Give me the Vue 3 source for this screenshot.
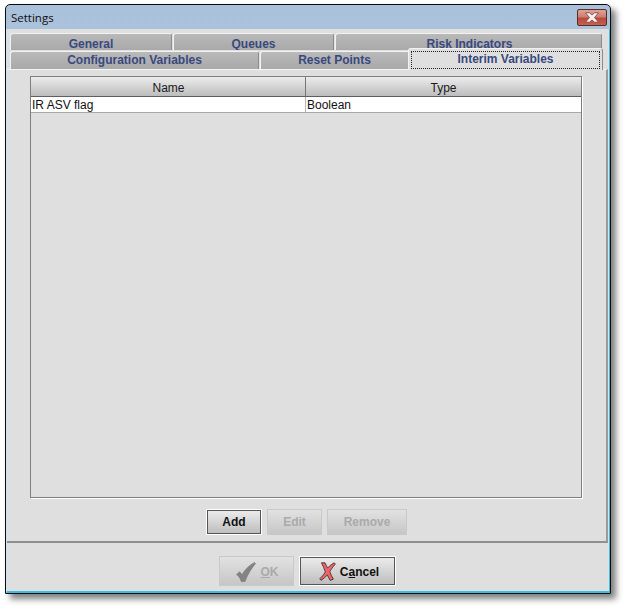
<script setup>
const rowOne = [
  { label: 'General', width: 162 },
  { label: 'Queues', width: 161 },
  { label: 'Risk Indicators', width: 267 }
]
const rowTwo = [
  { label: 'Configuration Variables', width: 249 },
  { label: 'Reset Points', width: 149 }
]
</script>

<template>
  <div class="page">
    <div class="window">
      <header class="titlebar">
        <span class="title">Settings</span>
        <button class="close" aria-label="Close">
          <svg width="16" height="11" viewBox="0 0 16 11">
            <path d="M1.5 0.8 L5.5 0.8 L8 3 L10.5 0.8 L14.5 0.8 L10.5 5.5 L14.5 10.2 L10.5 10.2 L8 8 L5.5 10.2 L1.5 10.2 L5.5 5.5 Z" fill="#f5f1f0" stroke="#7a4038" stroke-width="0.8" />
          </svg>
        </button>
      </header>
      <div class="body">
        <div class="tabs">
          <div class="tab-row first">
            <div v-for="t in rowOne" :key="t.label" class="tab" :style="{ width: t.width + 'px' }">{{ t.label }}</div>
          </div>
          <div class="tab-row second">
            <div v-for="t in rowTwo" :key="t.label" class="tab" :style="{ width: t.width + 'px' }">{{ t.label }}</div>
            <div class="tab active"><span class="focus">Interim Variables</span></div>
          </div>
        </div>
        <section class="panel">
          <div class="table">
            <div class="thead">
              <div class="th name">Name</div>
              <div class="th type">Type</div>
            </div>
            <div class="tr">
              <div class="td name">IR ASV flag</div>
              <div class="td type">Boolean</div>
            </div>
          </div>
          <div class="panel-actions">
            <button class="btn add">Add</button>
            <button class="btn edit" disabled>Edit</button>
            <button class="btn remove" disabled>Remove</button>
          </div>
        </section>
        <footer class="footer">
          <button class="btn ok" disabled>
            <svg width="20" height="20" viewBox="0 0 20 20">
              <path d="M0.5 12.5 L3.5 9.8 L6.2 12.5 C9 7.5 13.5 3 18.5 0.5 L19.5 1.5 C15.5 6.5 11.5 12.5 9 19.5 L5.2 19.5 C4.6 16.8 3 14.4 0.5 12.5 Z" fill="#848484" stroke="#767676" stroke-width="0.6" />
            </svg>
            <span><u>O</u>K</span>
          </button>
          <button class="btn cancel">
            <svg width="17" height="19" viewBox="0 0 17 19">
              <path d="M2.5 0.8 L6 0.8 C6.8 2.6 7.6 4.2 8.6 6 C10.5 4 12.6 2.2 15.2 0.8 L16.4 2 C14 4.6 12.2 7.2 10.8 9.6 C11.8 12.4 13 15 14.4 17.2 L11.2 18.4 C10 16.6 9.2 14.8 8.4 13 C6.4 15 4.4 16.8 2 18.4 L0.8 16.8 C3 14.8 4.8 12.6 6.4 10 C5.4 7 4 4 2.5 0.8 Z" fill="#f4616b" stroke="#2e2a2a" stroke-width="0.8" />
            </svg>
            <span>C<u>a</u>ncel</span>
          </button>
        </footer>
      </div>
    </div>
  </div>
</template>

<style>
html, body { margin: 0; background: #ffffff; }
</style>

<style scoped>
.page {
  width: 623px;
  height: 606px;
  padding: 4px 0 0 5px;
  box-sizing: border-box;
  font-family: "Liberation Sans", Arial, sans-serif;
}
.window {
  width: 606px;
  height: 590px;
  box-sizing: border-box;
  border: 1px solid #0c0c0c;
  border-radius: 5px 5px 0 0;
  background: linear-gradient(#a9c1da, #bccfe2);
  box-shadow: 5px 5px 6px rgba(60, 60, 60, 0.65);
  display: flex;
  flex-direction: column;
  overflow: hidden;
}
.titlebar {
  height: 24px;
  flex: none;
  display: flex;
  align-items: center;
  justify-content: space-between;
  padding: 0 3px 0 5px;
}
.title {
  font-family: "Open Sans", "Liberation Sans", sans-serif;
  font-size: 11.5px;
  color: #0f0f0f;
}
.close {
  width: 30px;
  height: 17px;
  margin-top: 1px;
  padding: 0;
  border: 1px solid #5d2b2b;
  border-radius: 2px;
  background: linear-gradient(#dba59a 0%, #cf7f72 45%, #b94a3c 55%, #c4614f 100%);
  display: flex;
  align-items: center;
  justify-content: center;
}
.body {
  flex: 1;
  background: #dfdfdf;
  border-left: 1px solid #cfe3f5;
  border-bottom: 2px solid #3cbde6;
  border-right: 1px solid #3cbde6;
  display: flex;
  flex-direction: column;
  min-height: 0;
}
.tabs {
  padding: 4px 0 0 3px;
  display: flex;
  flex-direction: column;
}
.tab-row {
  display: flex;
  gap: 1px;
}
.first { height: 17px; }
.second { height: 19px; align-items: flex-end; }
.tab {
  box-sizing: border-box;
  height: 100%;
  background: linear-gradient(#b9b9b9, #a9a9a9);
  border-top: 1px solid #f2f2f2;
  border-left: 1px solid #f2f2f2;
  border-right: 1px solid #8c8c8c;
  border-radius: 3px 3px 0 0;
  color: #38497e;
  font-size: 12px;
  font-weight: 700;
  text-align: center;
  line-height: 17px;
  overflow: hidden;
  white-space: nowrap;
}
.first .tab { line-height: 21px; }
.first .tab:last-child { padding-left: 2px; }
.second .tab { height: 18px; }
.second .tab.active {
  width: 195px;
  height: 22px;
  margin-left: -2px;
  margin-bottom: -1px;
  position: relative;
  background: #dfdfdf;
  border-right: 1px solid #8c8c8c;
  padding: 2px 2px 0 2px;
}
.focus {
  display: block;
  height: 18px;
  box-sizing: border-box;
  border: 1px dotted #222;
  line-height: 14px;
}
.panel {
  flex: none;
  width: 601px;
  height: 474px;
  box-sizing: border-box;
  border-top: 1px solid #f4f4f4;
  border-right: 2px solid #9a9a9a;
  border-bottom: 2px solid #8f8f8f;
  padding: 6px 24px 0 23px;
  display: flex;
  flex-direction: column;
  align-items: stretch;
}
.table {
  height: 422px;
  flex: none;
  box-sizing: border-box;
  border: 1px solid #7e7e7e;
  box-shadow: 1px 1px 0 #fff;
}
.thead {
  display: flex;
  height: 20px;
  box-sizing: border-box;
  background: linear-gradient(#ececec, #bdbdbd);
  border-bottom: 1px solid #5e5e5e;
}
.th {
  font-size: 12px;
  color: #1a1a1a;
  text-align: center;
  line-height: 22px;
}
.name { width: 275px; box-sizing: border-box; }
.th.name { padding-left: 1px; border-right: 1px solid #777; }
.type { flex: 1; }
.tr {
  display: flex;
  height: 15px;
  background: #fff;
  border-bottom: 1px solid #a9a9a9;
}
.td {
  font-size: 12px;
  color: #111;
  line-height: 16px;
  padding-left: 1px;
}
.td.name { border-right: 1px solid #b5b5b5; }
.panel-actions {
  margin-top: 11px;
  display: flex;
  gap: 5px;
  padding-left: 176px;
}
.btn {
  box-sizing: border-box;
  padding: 0;
  font-family: inherit;
  font-size: 12px;
  font-weight: 700;
  background: linear-gradient(#ededed, #bcbcbc);
  color: #111;
  border: 1px solid #fff;
  outline: 1px solid #555;
  outline-offset: -2px;
  display: flex;
  align-items: center;
  justify-content: center;
  height: 26px;
}
.btn[disabled] {
  color: #aaa;
  outline: none;
  border: 1px solid #c9c9c9;
  background: linear-gradient(#e2e2e2, #c6c6c6);
}
.add { width: 56px; }
.edit { width: 55px; }
.remove { width: 80px; }
.footer {
  flex: 1;
  display: flex;
  gap: 5px;
  padding: 13px 0 0 212px;
}
.ok { width: 75px; height: 30px; gap: 4px; padding: 1px 0 0 2px; }
.cancel { width: 97px; height: 30px; gap: 4px; padding: 1px 0 0 3px; }
</style>
